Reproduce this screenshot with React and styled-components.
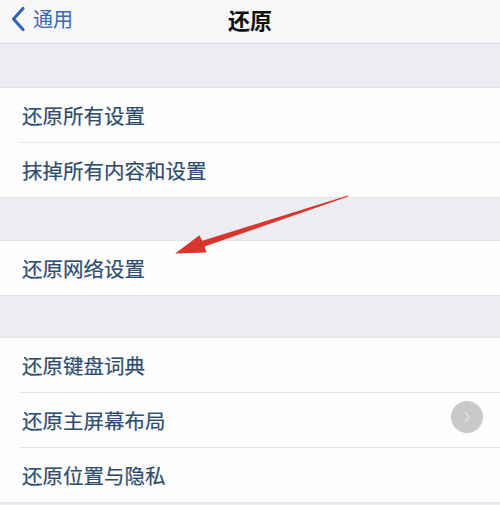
import React from 'react';
import styled, { createGlobalStyle } from 'styled-components';

const Global = createGlobalStyle`
  html, body { margin: 0; padding: 0; }
  body {
    background: #ededf1;
    font-family: "Noto Sans CJK SC", "Noto Sans", sans-serif;
  }
`;

const groups = [
  { gap: 44, rows: ['还原所有设置', '抹掉所有内容和设置'] },
  { gap: 43, rows: ['还原网络设置'] },
  { gap: 42, rows: ['还原键盘词典', '还原主屏幕布局', '还原位置与隐私'] },
];

const App = () => {
  return (
    <>
      <Global />
      <Screen>
        <NavBar>
          <Back>
            <svg width="16" height="26" viewBox="0 0 16 26">
              <path d="M13 2.5 L3.5 13 L13 23.5" fill="none" stroke="#2f67b9" strokeWidth="3.2" strokeLinecap="round" strokeLinejoin="round" />
            </svg>
            <span>通用</span>
          </Back>
          <Title>还原</Title>
        </NavBar>
        {groups.map((g, i) => (
          <React.Fragment key={i}>
            <Spacer $h={g.gap} />
            <Group>
              {g.rows.map((label, j) => (
                <Row key={label} $last={j === g.rows.length - 1}>
                  <Label>{label}</Label>
                </Row>
              ))}
            </Group>
          </React.Fragment>
        ))}
        <Arrow width="500" height="505" viewBox="0 0 500 505">
          <polygon
            points="348.3,196.6 204.6,246.4 206.5,252.5 175,253.5 199.5,235.2 202.3,240.7 347.8,195.6"
            fill="#d8362c"
          />
        </Arrow>
        <Assist>
          <svg width="10" height="12" viewBox="0 0 10 12">
            <path d="M3 1 L7 6 L3 11" fill="none" stroke="#e4e4e4" strokeWidth="1.4" />
          </svg>
        </Assist>
      </Screen>
    </>
  );
};

export default App;

const Screen = styled.div`
  position: relative;
  width: 500px;
  height: 505px;
  overflow: hidden;
  background: #ededf1;
`;

const NavBar = styled.div`
  position: relative;
  height: 44px;
  box-sizing: border-box;
  background: #f7f7f9;
  border-bottom: 1px solid #d7d7db;
  display: flex;
  align-items: center;
  justify-content: center;
`;

const Back = styled.div`
  position: absolute;
  left: 10px;
  top: 6px;
  display: flex;
  align-items: center;
  gap: 7px;
  color: #3a6aad;
  font-size: 20px;
  span { line-height: 26px; }
`;

const Title = styled.div`
  font-size: 22px;
  font-weight: 700;
  color: #111;
  margin-top: -5px;
`;

const Spacer = styled.div`
  height: ${p => p.$h}px;
  box-sizing: border-box;
  border-bottom: 1px solid #e2e2e6;
`;

const Group = styled.div`
  background: #fdfdfd;
  border-bottom: 1px solid #e2e2e6;
`;

const Row = styled.div`
  height: 54px;
  margin-left: 20px;
  display: flex;
  align-items: center;
  border-bottom: ${p => (p.$last ? 'none' : '1px solid #e6e6ea')};
`;

const Label = styled.span`
  font-size: 20.5px;
  color: #2e4d6e;
  padding-left: 2px;
  -webkit-text-stroke: 0.2px #2e4d6e;
`;

const Arrow = styled.svg`
  position: absolute;
  left: 0;
  top: 0;
  pointer-events: none;
`;

const Assist = styled.div`
  position: absolute;
  left: 451px;
  top: 401px;
  width: 32px;
  height: 32px;
  border-radius: 50%;
  background: #c9c9cb;
  display: flex;
  align-items: center;
  justify-content: center;
`;
